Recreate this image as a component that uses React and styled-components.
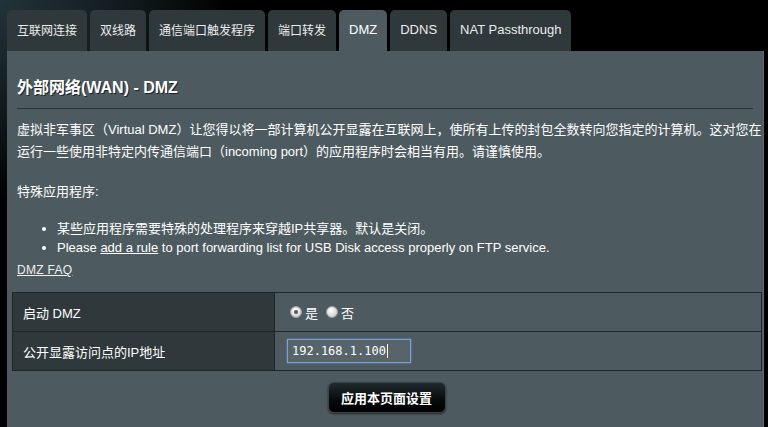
import React, {useEffect, useRef} from 'react';
import styled, {createGlobalStyle} from 'styled-components';

const GlobalStyle = createGlobalStyle`
  html, body {
    margin: 0;
    padding: 0;
    background: #000;
  }
  body {
    font-family: "Liberation Sans", Arial, "Noto Sans CJK SC", sans-serif;
    font-size: 13px;
    color: #fff;
  }
`

const Page = styled.div`
  min-height: 427px;
  padding: 10px 0 0 7px;
  box-sizing: border-box;
  background: radial-gradient(ellipse 230px 200px at 0 0, #22333a 0%, #111a1d 55%, #000 100%);
  overflow: hidden;
`

const TabBar = styled.nav`
  display: flex;
  gap: 3px;
  height: 41px;
`

const Tab = styled.div`
  display: flex;
  align-items: center;
  padding: 0 10px 2px;
  border-radius: 5px 5px 0 0;
  background: ${p => p.$active ? '#4d5a5f' : '#2f383b'};
  color: ${p => p.$active ? '#fff' : '#ececec'};
  font-size: ${p => p.$size || 13}px;
  white-space: nowrap;
  cursor: pointer;
`

const Panel = styled.section`
  width: 757px;
  box-sizing: border-box;
  min-height: 376px;
  padding: 26px 2px 14px 5px;
  background: #4d5a5f;
  border-right: 1px solid #5d696d;
`

const Intro = styled.div`
  padding: 0 8px 0 5px;
`

const Title = styled.h2`
  margin: 0;
  font-size: 16px;
  line-height: 22px;
  font-weight: bold;
  text-shadow: 1px 1px 0 #1c2224;
`

const Divider = styled.hr`
  margin: 9px 0 0;
  border: 0;
  height: 1px;
  background: #2a3336;
`

const Description = styled.p`
  margin: 10px 0 0;
  line-height: 22px;
  white-space: nowrap;
`

const SubTitle = styled.p`
  margin: 18px 0 0;
  line-height: 22px;
`

const Notes = styled.ul`
  margin: 16px 0 0;
  padding-left: 40px;
  line-height: 19px;
`

const Link = styled.a`
  color: inherit;
  text-decoration: underline;
`

const Faq = styled.a`
  display: block;
  margin-top: 6px;
  font-size: 12px;
  line-height: 14px;
  color: #f0f0f0;
  text-decoration: underline;
  letter-spacing: 0.3px;
`

const SettingsTable = styled.table`
  width: 750px;
  margin-top: 15px;
  border-collapse: collapse;
`

const Label = styled.th`
  width: 241px;
  height: 38px;
  padding: 0 10px;
  text-align: left;
  font-weight: normal;
  background: #2f393c;
  border: 1px solid #1f2629;
`

const Value = styled.td`
  padding: 0 12px;
  border: 1px solid #1f2629;
`

const RadioGroup = styled.div`
  display: flex;
  align-items: center;
  padding-left: 3px;
`

const RadioOption = styled.label`
  display: flex;
  align-items: center;
  gap: 3px;
  margin-right: 8px;
  cursor: pointer;
`

const RadioDot = styled.span`
  width: 12px;
  height: 12px;
  border-radius: 50%;
  box-sizing: border-box;
  background: radial-gradient(circle at 40% 35%, #ffffff 0%, #d9d9d9 60%, #b5b5b5 100%);
  border: 1px solid #9a9a9a;
  display: flex;
  align-items: center;
  justify-content: center;

  &::after {
    content: '';
    width: 4px;
    height: 4px;
    border-radius: 50%;
    background: ${p => p.$checked ? '#555' : 'transparent'};
  }
`

const Field = styled.div`
  position: relative;
  display: inline-block;
`

const IpInput = styled.input`
  width: 124px;
  height: 24px;
  box-sizing: border-box;
  padding: 0 4px;
  background: #57646a;
  border: 1px solid #7f9fd6;
  box-shadow: 0 0 2px #6b8fd0;
  color: #fff;
  font-family: "DejaVu Sans Mono", "Liberation Mono", monospace;
  font-size: 12px;
  outline: none;
  caret-color: transparent;
`

/* the text cursor seen in the screenshot */
const Caret = styled.span`
  position: absolute;
  left: 100px;
  top: 5px;
  width: 1px;
  height: 14px;
  background: #fff;
  pointer-events: none;
`

const Actions = styled.div`
  display: flex;
  justify-content: center;
  margin-top: 11px;
`

const ApplyButton = styled.button`
  width: 118px;
  height: 31px;
  border-radius: 6px;
  border: 1px solid #3b4346;
  background: linear-gradient(#1f2a2e 0%, #070a0b 60%, #000 100%);
  box-shadow: 0 1px 2px rgba(0, 0, 0, 0.6);
  color: #fff;
  font-family: "Liberation Sans", "Noto Sans CJK SC", sans-serif;
  font-size: 13px;
  font-weight: bold;
  cursor: pointer;
`

const tabs = [
    {name: '互联网连接', size: 12},
    {name: '双线路', size: 12},
    {name: '通信端口触发程序', size: 12},
    {name: '端口转发', size: 12},
    {name: 'DMZ', active: true},
    {name: 'DDNS'},
    {name: 'NAT Passthrough'},
]

const App = () => {
    const ipRef = useRef(null)

    useEffect(() => {
        const el = ipRef.current
        if (el) {
            el.focus()
            el.setSelectionRange(el.value.length, el.value.length)
        }
    }, [])

    return (
        <>
            <GlobalStyle/>
            <Page>
                <TabBar>
                    {tabs.map(t => (
                        <Tab key={t.name} $active={t.active} $size={t.size}>{t.name}</Tab>
                    ))}
                </TabBar>

                <Panel>
                    <Intro>
                        <Title>外部网络(WAN) - DMZ</Title>
                        <Divider/>
                        <Description>
                            虚拟非军事区（Virtual DMZ）让您得以将一部计算机公开显露在互联网上，使所有上传的封包全数转向您指定的计算机。这对您在
                            <br/>
                            运行一些使用非特定内传通信端口（incoming port）的应用程序时会相当有用。请谨慎使用。
                        </Description>
                        <SubTitle>特殊应用程序:</SubTitle>
                        <Notes>
                            <li>某些应用程序需要特殊的处理程序来穿越IP共享器。默认是关闭。</li>
                            <li>Please <Link href="#">add a rule</Link> to port forwarding list for USB Disk access properly on FTP service.</li>
                        </Notes>
                        <Faq href="#">DMZ FAQ</Faq>
                    </Intro>

                    <SettingsTable>
                        <tbody>
                        <tr>
                            <Label>启动 DMZ</Label>
                            <Value>
                                <RadioGroup>
                                    <RadioOption><RadioDot $checked/>是</RadioOption>
                                    <RadioOption><RadioDot/>否</RadioOption>
                                </RadioGroup>
                            </Value>
                        </tr>
                        <tr>
                            <Label>公开显露访问点的IP地址</Label>
                            <Value>
                                <Field>
                                    <IpInput ref={ipRef} defaultValue="192.168.1.100"/>
                                    <Caret/>
                                </Field>
                            </Value>
                        </tr>
                        </tbody>
                    </SettingsTable>

                    <Actions>
                        <ApplyButton>应用本页面设置</ApplyButton>
                    </Actions>
                </Panel>
            </Page>
        </>
    );
};

export default App;
